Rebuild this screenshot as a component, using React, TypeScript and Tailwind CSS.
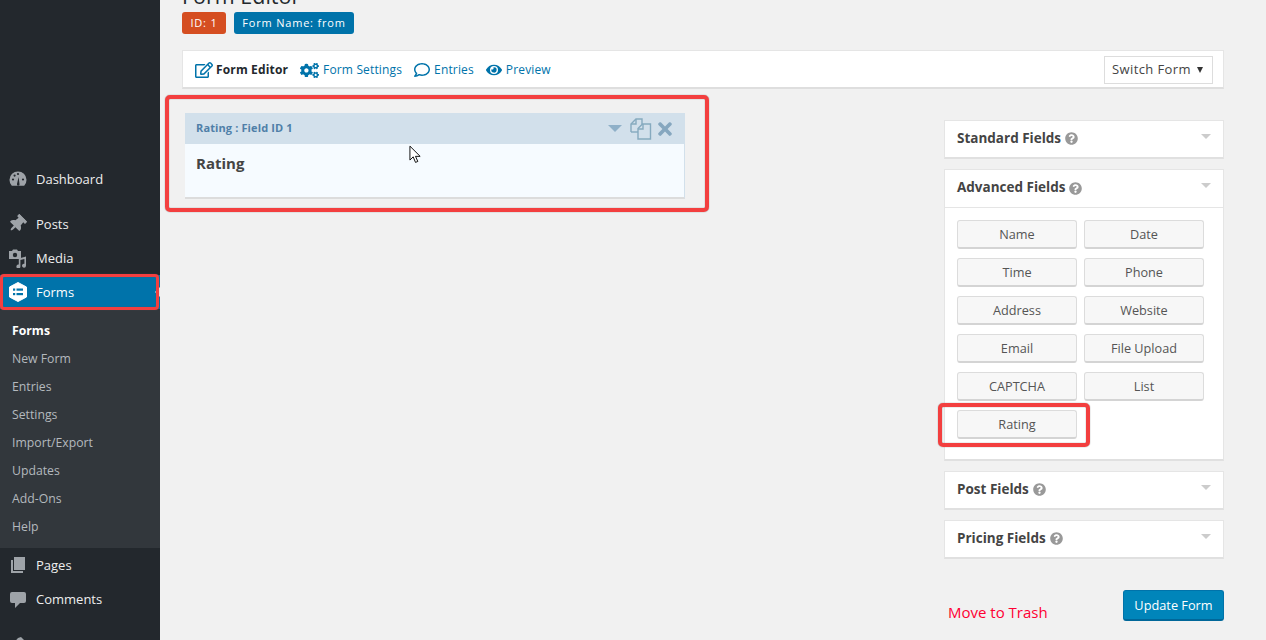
import React from 'react';
import { FaCogs, FaEye, FaQuestionCircle, FaRegComment, FaRegEdit, FaTimes, FaThumbtack } from 'react-icons/fa';

const sans = { fontFamily: '"Open Sans", sans-serif' };

function GaugeIcon() {
  return (
    <svg viewBox="0 0 20 20" className="w-[20px] h-[20px]" fill="#9ea3a8">
      <path d="M3.8 16.7A8.5 8.5 0 1 1 16.2 16.7Z" />
      <circle cx="5" cy="10.5" r="1.1" fill="#23282d" />
      <circle cx="6.6" cy="6.6" r="1.1" fill="#23282d" />
      <circle cx="10" cy="5" r="1.1" fill="#23282d" />
      <circle cx="15" cy="10.5" r="1.1" fill="#23282d" />
      <path d="M9 15l1.6-7 .9 7a1.3 1.3 0 1 1-2.5 0Z" fill="#23282d" />
    </svg>
  );
}

function MediaIcon() {
  return (
    <svg viewBox="0 0 20 20" className="w-[20px] h-[20px]" fill="#9ea3a8">
      <path d="M1 3h3l1-1.5h4L10 3h3v8H1Z" />
      <circle cx="7" cy="7" r="2.2" fill="#23282d" />
      <path d="M18 8.5v9.2a2 2 0 1 1-1.6-2V11l-4 1v6.5a2 2 0 1 1-1.6-2v-6Z" />
    </svg>
  );
}

function FormsIcon() {
  return (
    <svg viewBox="0 0 20 20" className="w-[20px] h-[20px]">
      <path d="M10 .5 18.5 5v10L10 19.5 1.500 15V5Z" fill="#fff" stroke="#fff" strokeLinejoin="round" />
      <rect x="5" y="6.500" width="2.200" height="2.200" fill="#0073aa" />
      <rect x="8.500" y="6.500" width="6.500" height="2.200" fill="#0073aa" />
      <rect x="5" y="11" width="2.200" height="2.200" fill="#0073aa" />
      <rect x="8.500" y="11" width="6.500" height="2.200" fill="#0073aa" />
    </svg>
  );
}

function PagesIcon() {
  return (
    <svg viewBox="0 0 20 20" className="w-[20px] h-[20px]" fill="#9ea3a8">
      <path d="M6 2h11v13H6Z" />
      <path d="M3 5h2v11h10v2H3Z" />
    </svg>
  );
}

function CommentIcon() {
  return (
    <svg viewBox="0 0 20 20" className="w-[20px] h-[20px]" fill="#9ea3a8">
      <path d="M4 3h12a2 2 0 0 1 2 2v7a2 2 0 0 1-2 2h-4l-5 5v-5H4a2 2 0 0 1-2-2V5a2 2 0 0 1 2-2Z" />
    </svg>
  );
}

function AppearanceIcon() {
  return (
    <svg viewBox="0 0 20 20" className="w-[20px] h-[20px]" fill="#9ea3a8">
      <path d="M3 12 10 4l3-1 4 4-1 2-7 8Z" />
    </svg>
  );
}

function DuplicateIcon() {
  return (
    <svg viewBox="0 0 22 22" className="w-[22px] h-[22px]" fill="none" stroke="#86aabf" strokeWidth="1.400">
      <path d="M1 14V6l5-5h6v5" />
      <path d="M6 1v5H1" />
      <path d="M1 14h7" />
      <path d="M8 10.500 12.500 6H20.500v15H8Z" fill="#d2e0eb" />
      <path d="M13 6v5H8" />
    </svg>
  );
}

function Arrow() {
  return <span className="w-0 h-0 border-x-[5px] border-x-transparent border-t-[5px] border-t-[#ccc]" />;
}

function SideItem({ icon, label, active }: { icon: React.ReactNode; label: string; active?: boolean }) {
  return (
    <div className={`relative h-[34px] flex items-center text-[13px] ${active ? 'bg-[#0073aa] text-white' : 'text-[#eee]'}`}>
      <span className="w-[36px] pl-[8px] flex items-center shrink-0">{icon}</span>
      <span className="pt-[2px]">{label}</span>
      {active && (
        <span className="absolute right-0 top-[12px] w-0 h-0 border-y-[5px] border-y-transparent border-r-[5px] border-r-[#f1f1f1]" />
      )}
    </div>
  );
}

function Panel({ title, children }: { title: string; children?: React.ReactNode }) {
  return (
    <div className="bg-white border border-[#e5e5e5] border-b-2 border-b-[#e0e0e0]">
      <div className={`pl-[12px] pr-[12px] flex items-center justify-between ${children ? 'h-[38px] border-b border-[#e5e5e5]' : 'h-[36px]'}`}>
        <span className="flex items-center gap-[4px] text-[13.5px] font-bold text-[#444] pb-[2px]">
          {title}
          <FaQuestionCircle className="text-[13px] text-[#999] mt-[1px]" />
        </span>
        <span className="mb-[6px] flex"><Arrow /></span>
      </div>
      {children}
    </div>
  );
}

function FieldButton({ label }: { label: string }) {
  return (
    <div className="h-[29px] pt-[2px] rounded-[3px] bg-[#f7f7f7] border border-[#dcdcdc] border-b-2 border-b-[#d4d4d4] flex items-center justify-center text-[12.7px] text-[#555]">
      {label}
    </div>
  );
}

export default function App() {
  const subItems = ['New Form', 'Entries', 'Settings', 'Import/Export', 'Updates', 'Add-Ons', 'Help'];
  const fields = ['Name', 'Date', 'Time', 'Phone', 'Address', 'Website', 'Email', 'File Upload', 'CAPTCHA', 'List', 'Rating'];

  return (
    <div className="relative flex h-[640px] w-[1266px] overflow-hidden bg-[#f1f1f1]" style={sans}>
      {/* Admin menu */}
      <aside className="w-[160px] shrink-0 bg-[#23282d] pt-[162px]">
        <SideItem icon={<GaugeIcon />} label="Dashboard" />
        <div className="h-[11px]" />
        <SideItem icon={<FaThumbtack className="text-[18px] text-[#9ea3a8] rotate-[45deg]" />} label="Posts" />
        <SideItem icon={<MediaIcon />} label="Media" />
        <SideItem icon={<FormsIcon />} label="Forms" active />
        <div className="bg-[#32373c] pt-[8px] h-[239px] text-[12.25px] text-[#b4b9be]">
          <div className="h-[28px] pl-[12px] flex items-center font-bold text-white">Forms</div>
          {subItems.map(item => (
            <div key={item} className="h-[28px] pl-[12px] flex items-center">{item}</div>
          ))}
        </div>
        <SideItem icon={<PagesIcon />} label="Pages" />
        <SideItem icon={<CommentIcon />} label="Comments" />
        <div className="h-[11px]" />
        <SideItem icon={<AppearanceIcon />} label="Appearance" />
      </aside>

      {/* Page */}
      <main className="flex-1 min-w-0 pl-[22px] pr-[42px] flex flex-col">
        <h1 className="h-[12px] text-[21.5px] leading-[29px] text-[#23282d] -mt-[19px] mb-[19px]">Form Editor</h1>
        <div className="flex gap-[8px] text-[11px] tracking-[0.8px] text-white">
          <span className="h-[22px] w-[44px] rounded-[3px] bg-[#d54e21] flex items-center justify-center">ID: 1</span>
          <span className="h-[22px] w-[120px] rounded-[3px] bg-[#0073aa] flex items-center justify-center">Form Name: from</span>
        </div>

        {/* Toolbar */}
        <div className="mt-[16px] h-[39px] bg-white border border-[#e5e5e5] border-b-2 border-b-[#dedede] flex items-center justify-between pl-[12px] pr-[10px] pt-[2px]">
          <div className="flex items-center text-[12px] tracking-[0.15px] text-[#0073aa]">
            <FaRegEdit className="text-[18px] text-[#0073aa] mr-[3px]" />
            <span className="font-bold text-[#23282d] mr-[12px]">Form Editor</span>
            <FaCogs className="text-[19px] text-[#0073aa] mr-[4px]" />
            <span className="mr-[12px]">Form Settings</span>
            <FaRegComment className="text-[16px] text-[#0073aa] mr-[4px]" />
            <span className="mr-[12px]">Entries</span>
            <FaEye className="text-[16px] text-[#0073aa] mr-[4px]" />
            <span>Preview</span>
          </div>
          <div className="h-[28px] w-[109px] border border-[#ddd] flex items-center justify-between pl-[7px] pr-[9px] text-[13px] tracking-[0.4px] text-[#444]">
            Switch Form
            <span className="w-0 h-0 border-x-[3.500px] border-x-transparent border-t-[6px] border-t-[#333]" />
          </div>
        </div>

        <div className="flex justify-between">
          {/* Canvas */}
          <div className="w-[500px] ml-[3px] mt-[24px] self-start border-r border-[#d2e0eb] border-b-2 border-b-[#dcdcdc] bg-[#f6fbff]">
            <div className="h-[31px] bg-[#d2e0eb] flex items-center justify-between pl-[11px] pr-[9px]">
              <span className="text-[11px] tracking-[0.12px] font-bold text-[#4f7fa8]">Rating : Field ID 1</span>
              <div className="flex items-center">
                <span className="w-0 h-0 border-x-[7px] border-x-transparent border-t-[7px] border-t-[#8fb0c8] mr-[8px]" />
                <DuplicateIcon />
                <FaTimes className="text-[20px] text-[#86a7bf] ml-[3px]" />
              </div>
            </div>
            <div className="h-[53px] pl-[11px] pt-[8px] text-[15px] font-bold text-[#444]">Rating</div>
          </div>

          {/* Field groups */}
          <div className="w-[280px] mt-[31px] flex flex-col gap-[10px]">
            <Panel title="Standard Fields" />
            <Panel title="Advanced Fields">
              <div className="grid grid-cols-2 gap-x-[7px] gap-y-[9px] pl-[12px] pr-[19px] pt-[12px] h-[251px] content-start">
                {fields.map(f => (
                  <FieldButton key={f} label={f} />
                ))}
              </div>
            </Panel>
            <Panel title="Post Fields" />
            <Panel title="Pricing Fields" />
            <div className="mt-[21px] flex items-start justify-between pl-[4px]">
              <span className="mt-[11px] text-[15px] text-[#ff0033]">Move to Trash</span>
              <span className="h-[31px] w-[101px] pt-[2px] rounded-[3px] bg-[#0085ba] border border-[#0073aa] border-b-2 border-b-[#006799] flex items-center justify-center text-[12.75px] text-white">Update Form</span>
            </div>
          </div>
        </div>
      </main>

      {/* Annotations drawn over the screenshot */}
      <div className="absolute left-[165px] top-[95px] w-[544px] h-[117px] border-[4px] border-[#f33f3f] rounded-[5px] shadow-[0_0_1px_#555,inset_0_0_1px_#555]" />
      <div className="absolute left-[0px] top-[274px] w-[159px] h-[36px] border-[3px] border-[#f33f3f] rounded-[4px] shadow-[0_0_1px_#555,inset_0_0_1px_#555]" />
      <div className="absolute left-[938px] top-[403px] w-[152px] h-[44px] border-[4px] border-[#f33f3f] rounded-[5px] shadow-[0_0_1px_#555,inset_0_0_1px_#555]" />

      {/* Mouse pointer */}
      <svg viewBox="0 0 14 20" className="absolute left-[409px] top-[145px] w-[13px] h-[19px]" fill="#fff" stroke="#000" strokeWidth="1">
        <path d="M1 1v15l3.500-3.500 2.500 6 2.500-1-2.500-5.500h5Z" />
      </svg>
    </div>
  );
}
